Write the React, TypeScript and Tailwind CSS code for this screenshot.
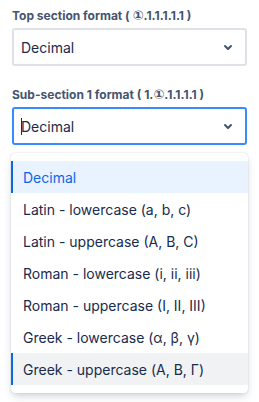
const OPTIONS = [
  'Decimal',
  'Latin - lowercase (a, b, c)',
  'Latin - uppercase (A, B, C)',
  'Roman - lowercase (i, ii, iii)',
  'Roman - uppercase (I, II, III)',
  'Greek - lowercase (α, β, γ)',
  'Greek - uppercase (Α, Β, Γ)',
];

const Chevron = () => (
  <svg width="24" height="24" viewBox="0 0 24 24" className="shrink-0 text-[#44546f]">
    <path
      fill="currentColor"
      d="M8.292 10.293a1.009 1.009 0 000 1.419l2.939 2.965c.218.215.5.322.779.322s.556-.107.769-.322l2.93-2.955a1.01 1.01 0 000-1.419.987.987 0 00-1.406 0l-2.298 2.317-2.307-2.327a.99.99 0 00-1.406 0z"
    />
  </svg>
);

const Circled = () => (
  <span className="text-[13px] font-['DejaVu_Sans',sans-serif]">①</span>
);

const SelectBox = ({ focused }: { focused?: boolean }) => (
  <div
    className={
      focused
        ? 'flex h-[38px] items-center rounded-[3px] border-2 border-[#388bff] bg-white pl-[7px] pr-[5px]'
        : 'flex h-[38px] items-center rounded-[3px] border-2 border-[#dfe1e6] bg-white pl-[7px] pr-[5px]'
    }
  >
    <div className="flex flex-1 items-center text-[14px] text-[#172b4d]">
      {focused && <span className="mr-[-1px] h-[17px] w-px bg-[#172b4d]" />}
      Decimal
    </div>
    <Chevron />
  </div>
);

export default function App() {
  const selected = 0;
  const hovered = 6;

  return (
    <div className="min-h-screen bg-white px-3 pt-2 font-['Inter',sans-serif]">
      {/* Top section */}
      <div className="h-4 text-[12px] font-bold leading-4 text-[#44546f]">
        Top section format ( <Circled />.1.1.1.1.1 )
      </div>
      <div className="mt-1">
        <SelectBox />
      </div>

      {/* Sub-section */}
      <div className="mt-[21px] h-4 text-[12px] font-bold leading-4 text-[#44546f]">
        Sub-section 1 format ( 1.<Circled />.1.1.1.1 )
      </div>
      <div className="mt-1">
        <SelectBox focused />
      </div>

      {/* Dropdown menu */}
      <div className="-mx-px mt-2 rounded-[4px] bg-white py-2 shadow-[0_4px_8px_-2px_rgba(9,30,66,0.25),0_0_1px_rgba(9,30,66,0.31)]">
        {OPTIONS.map((opt, i) => (
          <div
            key={opt}
            className={
              i === selected
                ? 'flex h-8 items-center bg-[#e9f2ff] pl-3 text-[14px] text-[#0c66e4] shadow-[inset_2px_0_0_#0c66e4]'
                : i === hovered
                  ? 'flex h-8 items-center bg-[#f1f2f4] pl-3 text-[14px] text-[#172b4d] shadow-[inset_2px_0_0_#0c66e4]'
                  : 'flex h-8 items-center pl-3 text-[14px] text-[#172b4d]'
            }
          >
            {opt}
          </div>
        ))}
      </div>
    </div>
  );
}
